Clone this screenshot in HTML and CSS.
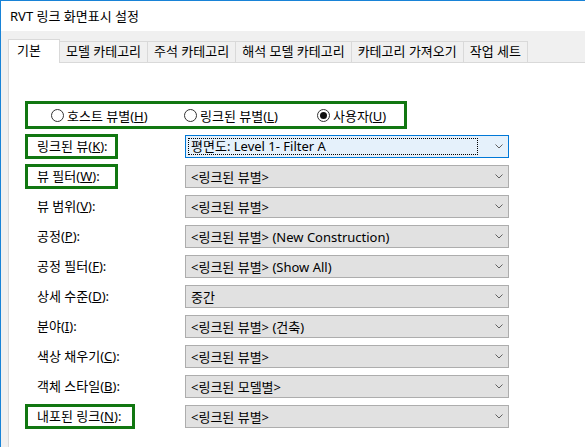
FILE: index.html
```html
<!DOCTYPE html>
<html>
<head>
  <meta charset="UTF-8">
  <title>RVT 링크 화면표시 설정</title>
  <link rel="stylesheet" href="styles.css">
</head>
<body>
  <div class="window">
    <div class="titlebar">RVT 링크 화면표시 설정</div>

    <div class="dialog">
      <!-- Tabs -->
      <div class="tabs">
        <div class="tab active">기본</div>
        <div class="tab">모델 카테고리</div>
        <div class="tab">주석 카테고리</div>
        <div class="tab">해석 모델 카테고리</div>
        <div class="tab">카테고리 가져오기</div>
        <div class="tab">작업 세트</div>
      </div>

      <div class="panel">
        <div class="radio-group mark">
          <label class="radio"><span class="circle"></span><span>호스트 뷰별(<u>H</u>)</span></label>
          <label class="radio"><span class="circle"></span><span>링크된 뷰별(<u>L</u>)</span></label>
          <label class="radio"><span class="circle checked"></span><span>사용자(<u>U</u>)</span></label>
        </div>

        <div class="rows">
          <div class="row">
            <div class="label mark">링크된 뷰(<u>K</u>):</div>
            <div class="combo focused">
              <span class="combo-text"><span class="focus-rect">평면도: Level 1- Filter A</span></span>
              <svg class="chevron" width="8" height="5" viewBox="0 0 8 5"><polyline points="0.5,0.5 4,4 7.5,0.5" fill="none" stroke="#606060" stroke-width="1"/></svg>
            </div>
          </div>
          <div class="row">
            <div class="label mark">뷰 필터(<u>W</u>):</div>
            <div class="combo">
              <span class="combo-text">&lt;링크된 뷰별&gt;</span>
              <svg class="chevron" width="8" height="5" viewBox="0 0 8 5"><polyline points="0.5,0.5 4,4 7.5,0.5" fill="none" stroke="#606060" stroke-width="1"/></svg>
            </div>
          </div>
          <div class="row">
            <div class="label">뷰 범위(<u>V</u>):</div>
            <div class="combo">
              <span class="combo-text">&lt;링크된 뷰별&gt;</span>
              <svg class="chevron" width="8" height="5" viewBox="0 0 8 5"><polyline points="0.5,0.5 4,4 7.5,0.5" fill="none" stroke="#606060" stroke-width="1"/></svg>
            </div>
          </div>
          <div class="row">
            <div class="label">공정(<u>P</u>):</div>
            <div class="combo">
              <span class="combo-text">&lt;링크된 뷰별&gt; (New Construction)</span>
              <svg class="chevron" width="8" height="5" viewBox="0 0 8 5"><polyline points="0.5,0.5 4,4 7.5,0.5" fill="none" stroke="#606060" stroke-width="1"/></svg>
            </div>
          </div>
          <div class="row">
            <div class="label">공정 필터(<u>F</u>):</div>
            <div class="combo">
              <span class="combo-text">&lt;링크된 뷰별&gt; (Show All)</span>
              <svg class="chevron" width="8" height="5" viewBox="0 0 8 5"><polyline points="0.5,0.5 4,4 7.5,0.5" fill="none" stroke="#606060" stroke-width="1"/></svg>
            </div>
          </div>
          <div class="row">
            <div class="label">상세 수준(<u>D</u>):</div>
            <div class="combo">
              <span class="combo-text">중간</span>
              <svg class="chevron" width="8" height="5" viewBox="0 0 8 5"><polyline points="0.5,0.5 4,4 7.5,0.5" fill="none" stroke="#606060" stroke-width="1"/></svg>
            </div>
          </div>
          <div class="row">
            <div class="label">분야(<u>I</u>):</div>
            <div class="combo">
              <span class="combo-text">&lt;링크된 뷰별&gt; (건축)</span>
              <svg class="chevron" width="8" height="5" viewBox="0 0 8 5"><polyline points="0.5,0.5 4,4 7.5,0.5" fill="none" stroke="#606060" stroke-width="1"/></svg>
            </div>
          </div>
          <div class="row">
            <div class="label">색상 채우기(<u>C</u>):</div>
            <div class="combo">
              <span class="combo-text">&lt;링크된 뷰별&gt;</span>
              <svg class="chevron" width="8" height="5" viewBox="0 0 8 5"><polyline points="0.5,0.5 4,4 7.5,0.5" fill="none" stroke="#606060" stroke-width="1"/></svg>
            </div>
          </div>
          <div class="row">
            <div class="label">객체 스타일(<u>B</u>):</div>
            <div class="combo">
              <span class="combo-text">&lt;링크된 모델별&gt;</span>
              <svg class="chevron" width="8" height="5" viewBox="0 0 8 5"><polyline points="0.5,0.5 4,4 7.5,0.5" fill="none" stroke="#606060" stroke-width="1"/></svg>
            </div>
          </div>
          <div class="row">
            <div class="label mark wide">내포된 링크(<u>N</u>):</div>
            <div class="combo">
              <span class="combo-text">&lt;링크된 뷰별&gt;</span>
              <svg class="chevron" width="8" height="5" viewBox="0 0 8 5"><polyline points="0.5,0.5 4,4 7.5,0.5" fill="none" stroke="#606060" stroke-width="1"/></svg>
            </div>
          </div>
        </div>
      </div>
    </div>
  </div>
</body>
</html>
```

FILE: styles.css
```css
html, body {
  margin: 0;
  padding: 0;
}

body {
  width: 585px;
  height: 447px;
  overflow: hidden;
  font-family: "Segoe UI", "Noto Sans", "Noto Sans CJK KR", sans-serif;
  font-size: 13px;
  color: #000;
}

u {
  text-decoration: underline;
  text-underline-offset: 1px;
}

.window {
  height: 446px;
  border-top: 1px solid #1883d7;
  border-left: 1px solid #1883d7;
  background: #f0f0f0;
  display: flex;
  flex-direction: column;
}

.titlebar {
  height: 30px;
  line-height: 30px;
  padding-left: 9px;
  background: #fff;
}

.dialog {
  flex: 1;
  display: flex;
  flex-direction: column;
  padding: 8px 0 0 7px;
}

/* Tabs */
.tabs {
  display: flex;
  align-items: flex-end;
  position: relative;
  z-index: 1;
}

.tab {
  height: 21px;
  line-height: 19px;
  padding: 0 6px;
  border: 1px solid #d9d9d9;
  border-bottom: none;
  margin-right: -1px;
  background: #f0f0f0;
  white-space: nowrap;
  box-sizing: border-box;
}

.tab.active {
  height: 24px;
  line-height: 20px;
  padding: 0 18px 0 8px;
  background: #fff;
  margin-bottom: -1px;
  position: relative;
  z-index: 2;
}

.panel {
  flex: 1;
  background: #fff;
  border-top: 1px solid #d9d9d9;
  border-left: 1px solid #d9d9d9;
  padding: 38px 0 0 16px;
}

/* green highlight boxes */
.mark {
  border: 3px solid #117711;
}

.radio-group {
  width: 353px;
  height: 22px;
  display: grid;
  grid-template-columns: 133px 133px auto;
  align-items: center;
  padding-left: 23px;
}

.radio {
  display: flex;
  align-items: center;
  gap: 3px;
  white-space: nowrap;
}

.circle {
  width: 11px;
  height: 11px;
  border: 1px solid #333;
  border-radius: 50%;
  background: #fff;
  display: flex;
  align-items: center;
  justify-content: center;
}

.circle.checked::after {
  content: "";
  width: 7px;
  height: 7px;
  border-radius: 50%;
  background: #111;
}

.rows {
  margin-top: 6px;
}

.row {
  display: flex;
  align-items: center;
  height: 23px;
  margin-bottom: 7px;
}

.label {
  width: 160px;
  height: 25px;
  line-height: 25px;
  padding-left: 12px;
  box-sizing: border-box;
  white-space: nowrap;
}

.label.mark {
  width: 93px;
  line-height: 19px;
  padding-left: 9px;
  margin-right: 67px;
}

.label.mark.wide {
  width: 110px;
  margin-right: 50px;
}

.combo {
  width: 324px;
  height: 23px;
  box-sizing: border-box;
  border: 1px solid #adadad;
  background: #e1e1e1;
  display: flex;
  align-items: center;
}

.combo.focused {
  border-color: #0078d7;
  background: #e5f1fb;
}

.combo-text {
  flex: 1;
  padding-left: 5px;
  white-space: nowrap;
}

.combo.focused .combo-text {
  padding-left: 2px;
  margin-right: 17px;
  display: flex;
}

.focus-rect {
  flex: 1;
  height: 15px;
  line-height: 15px;
  padding-left: 2px;
  border: 1px dotted #000;
}

.chevron {
  margin-right: 5px;
}
```
